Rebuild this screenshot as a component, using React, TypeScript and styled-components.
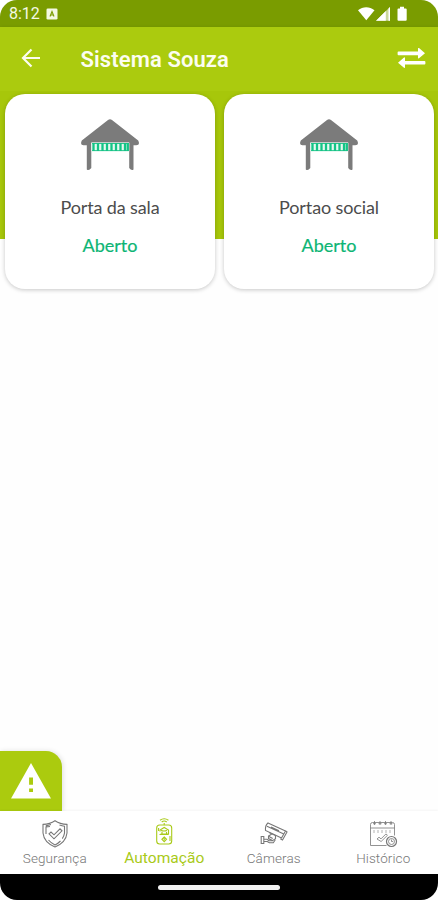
import React from "react";
import styled, { createGlobalStyle } from "styled-components";

const Global = createGlobalStyle`
  * { box-sizing: border-box; }
  html, body { margin: 0; background: #fff; }
`;

const Screen = styled.div`
  width: 438px;
  height: 900px;
  display: flex;
  flex-direction: column;
  overflow: hidden;
  border-radius: 17px;
  background: #fefefe;
  font-family: Roboto, sans-serif;
`;

const StatusBar = styled.header`
  flex: none;
  height: 27px;
  padding: 0 30px 0 9px;
  display: flex;
  align-items: center;
  background: #7a9c00;
  color: #f4f9e4;
`;

const Clock = styled.span`
  width: 37px;
  font-size: 16px;
  line-height: 27px;
`;

const StatusIcons = styled.div`
  display: flex;
  margin-left: auto;
`;

const AppBar = styled.div`
  flex: none;
  height: 64px;
  padding: 0 12px 2px 20px;
  display: flex;
  align-items: center;
  background: #abcb0e;
  color: #fcfdf0;
  box-shadow: 0 1px 3px rgba(70, 90, 0, 0.4);
`;

const Title = styled.h1`
  flex: 1;
  margin: 4px 0 0 38.5px;
  font-size: 22px;
  line-height: 28px;
  font-weight: 600;
  letter-spacing: 0.1px;
`;

const Content = styled.main`
  flex: 1;
  display: flex;
  flex-direction: column;
  justify-content: space-between;
  background: linear-gradient(#a7c70a 0 148px, #fefefe 148px);
`;

const Devices = styled.section`
  display: grid;
  grid-template-columns: 210px 210px;
  column-gap: 9px;
  padding: 3px 5px;
`;

const Card = styled.article`
  height: 195px;
  padding-top: 24px;
  display: flex;
  flex-direction: column;
  align-items: center;
  border-radius: 20px;
  background: #fff;
  box-shadow: 0 1px 4px rgba(0, 0, 0, 0.22);
  font-family: Lato, sans-serif;
`;

const DeviceName = styled.span`
  margin-top: 23px;
  font-size: 18px;
  line-height: 24px;
  letter-spacing: -0.12px;
  color: #4c4c4c;
`;

const DeviceState = styled.span`
  margin-top: 14px;
  font-size: 18px;
  line-height: 24px;
  color: #0db574;
  -webkit-text-stroke: 0.2px #0db574;
`;

const AlertButton = styled.button`
  width: 62px;
  height: 60px;
  padding: 0;
  border: 0;
  display: flex;
  align-items: center;
  justify-content: center;
  border-radius: 0 16px 0 0;
  background: #abcb0e;
  box-shadow: 1px 0 5px rgba(0, 0, 0, 0.12);
`;

const Nav = styled.nav`
  flex: none;
  height: 63px;
  display: grid;
  grid-template-columns: repeat(4, 1fr);
  background: #fff;
  box-shadow: 0 -1px 2px rgba(0, 0, 0, 0.04);
`;

const NavItem = styled.a<{ $active?: boolean }>`
  display: flex;
  flex-direction: column;
  align-items: center;
  padding-top: ${(p) => (p.$active ? 5 : 8)}px;
  color: ${(p) => (p.$active ? "#a9ca18" : "#777")};
  font-size: ${(p) => (p.$active ? 15.5 : 13.5)}px;
  line-height: 18px;
  letter-spacing: ${(p) => (p.$active ? 0.05 : 0.1)}px;
  font-weight: ${(p) => (p.$active ? 400 : 300)};
`;

const NavLabel = styled.span<{ $active?: boolean }>`
  margin-top: ${(p) => (p.$active ? 3 : 0)}px;
`;

const GestureBar = styled.footer`
  flex: none;
  height: 26px;
  display: flex;
  align-items: center;
  justify-content: center;
  background: #000;
`;

const GestureHandle = styled.div`
  width: 122px;
  height: 5px;
  border-radius: 3px;
  background: #f0f0f0;
`;

const KeyboardIcon = () => (
  <svg width="12" height="12" viewBox="0 0 12 12">
    <rect x="0.5" y="0.5" width="11" height="11" rx="1.3" fill="currentColor" />
    <path d="M4 8.500 6 3.500 8 8.500M4.700 7h2.600" fill="none" stroke="#7a9c00" strokeWidth="1.1" />
  </svg>
);

const SystemIcons = () => (
  <svg width="50" height="16" viewBox="0 0 50 16" fill="#fff">
    <path d="M0 4.200C4.800.2 11.600.2 16.500 4.200L8.300 14.300Z" />
    <path d="M18 14.700 32 1v13.700Z" opacity=".6" />
    <path d="M18 14.700 27.800 5v9.700ZM30.500 2.500 32 1v13.700h-1.500Z" />
    <path d="M42 .8h4v1.700h1.700q1 0 1 1v10.200q0 1-1 1h-7.200q-1 0-1-1V3.500q0-1 1-1H42Z" />
  </svg>
);

const BackIcon = () => (
  <svg width="22" height="22" viewBox="0 0 22 22" fill="none" stroke="currentColor" strokeWidth="2.200">
    <path d="M20 11H3.200M11.500 2.500 3 11l8.500 8.500" />
  </svg>
);

const SwapIcon = () => (
  <svg width="29" height="22" viewBox="0 0 29 22" fill="#fff">
    <path d="M1.500 4.600H21V1.300Q21.300.6 22 1.100L28 6.200 22 11.300q-.7.500-1-.2V8.200H1.500Q.6 8.200.6 7.200V5.600q0-1 .9-1Z" />
    <path d="M27.500 13.900H8v-3.200q-.3-.7-1-.2L1 15.700l6 5.100q.7.500 1-.2v-3.200h19.500q.9 0 .9-1v-1.500q0-1-.9-1Z" />
  </svg>
);

const GarageIcon = () => (
  <svg width="60" height="54" viewBox="0 0 60 54">
    <path
      d="M28 1.900q2-1.500 4 0L58.200 22.500Q60.500 27 56.200 27.300h-2.700V51.500q-2 1.500-4.300-1.500V24.500H11.300V50Q9 53 6.800 51.500V27.300H3.500Q-.3 27 1.800 22.500Z"
      fill="#7b7b7b"
    />
    <path d="M11.300 24.800h37.900v8.400H11.300Z" fill="#e6f9f1" />
    <path d="M12 25.500h36.500M12 32.600h36.500" stroke="#15c386" strokeWidth="0.900" />
    <path
      d="M13.500 25v8M18 25v8M22.500 25v8M27 25v8M31.500 25v8M36 25v8M40.500 25v8M45 25v8M47.800 25v8"
      stroke="#15c386"
      strokeWidth="2.300"
    />
  </svg>
);

const WarningIcon = () => (
  <svg width="40" height="36" viewBox="0 0 40 36">
    <path d="M20 0 40 35.500H0Z" fill="#fff" />
    <path d="M18.100 14.500h3.900v7.200h-3.900ZM18.100 25.400h3.900v3.700h-3.900Z" fill="#abcb0e" />
  </svg>
);

const ShieldIcon = () => (
  <svg width="28" height="30" viewBox="0 0 28 30" fill="none" stroke="currentColor" strokeWidth="1.100">
    <path d="M14 1.700Q19 5 26 5.400V14q-1 9.500-12 14Q3 23.500 2 14V5.400Q9 5 14 1.700Z" />
    <path d="M5 15V8l4-.5M4.800 6.900l5.200-1.400M18.500 6q2.500 1 5 1.200v7q-.5 3-2.200 5.400M19.500 22Q17 24.500 14 26q-4-2-6.500-5" />
    <path d="m8 14.800 2-1.800 3 2.800 6-6 2 2-8 8Z" />
  </svg>
);

const RemoteIcon = () => (
  <svg width="20" height="30" viewBox="0 0 20 30" fill="none" stroke="currentColor" strokeWidth="1.100">
    <path d="M6 4.300q4.200-3 8.400 0M7.700 6q2.500-2 5 0M10.200 7v2" />
    <rect x="2.700" y="9" width="15" height="19" rx="3" />
    <path d="M6 15.500V14l4.200-2.500 4.300 2.500v4h-8M7 14.500q3 1 6 0M8 16v3M12.500 16v3M5.500 18.500h9" />
    <path d="m10.200 21 2.300 2.300-2.300 2.300-2.300-2.300ZM10.200 22.300v2" />
    <path d="M4.600 12v3M16 20v5" />
  </svg>
);

const CameraIcon = () => (
  <svg width="30" height="30" viewBox="0 0 30 30" fill="none" stroke="currentColor" strokeWidth="1.100">
    <path d="m9 4 17.500 8-4 7L6.500 11.500Q6 6.500 9 4Z" />
    <path d="m8 7.200 16.800 7.800M12 8l8 3.700M26.500 12l1.500 1-4.500 8-2.200-1.200M10 13.500l6.500 3v3.300l-3 1.800-4-2V17l3-1.800" />
    <path d="M2.200 17.500h2.600v7H2.200ZM4.800 20.300H8l2 1.500h3.500M4.800 22.500h3.500l2 1.300h4l2-3M9.500 17.200l4.200 2.200" />
  </svg>
);

const HistoryIcon = () => (
  <svg width="30" height="30" viewBox="0 0 30 30" fill="none" stroke="currentColor" strokeWidth="0.800">
    <path d="M18.500 26.500h-16V5.500q0-2 2-2h20q2 0 2 2v11M2.500 9h24" />
    <path d="M6.500 2v4M12 2v4M17.500 2v4M23 2v4M5 4.700h3M10.500 4.700h3M16 4.700h3M21.500 4.700h3" />
    <path d="M6 11v3M10 11v3M14 11v3M18 11v3M22 11v3" opacity=".7" />
    <path d="m9 20 2-1.800 2 1.700 5-5 1.400 1.500-6.300 6.100Z" />
    <circle cx="23.500" cy="22.500" r="5" strokeWidth="1.200" />
    <circle cx="23.500" cy="22.500" r="3" />
    <path d="M23.500 20.500v2h1.700" />
  </svg>
);

const devices = [
  { name: "Porta da sala", state: "Aberto" },
  { name: "Portao social", state: "Aberto" },
];

const tabs = [
  { label: "Segurança", Icon: ShieldIcon, active: false },
  { label: "Automação", Icon: RemoteIcon, active: true },
  { label: "Câmeras", Icon: CameraIcon, active: false },
  { label: "Histórico", Icon: HistoryIcon, active: false },
];

export default function App() {
  return (
    <>
      <Global />
      <Screen>
        <StatusBar>
          <Clock>8:12</Clock>
          <KeyboardIcon />
          <StatusIcons>
            <SystemIcons />
          </StatusIcons>
        </StatusBar>
        <AppBar>
          <BackIcon />
          <Title>Sistema Souza</Title>
          <SwapIcon />
        </AppBar>
        <Content>
          <Devices>
            {devices.map((d) => (
              <Card key={d.name}>
                <GarageIcon />
                <DeviceName>{d.name}</DeviceName>
                <DeviceState>{d.state}</DeviceState>
              </Card>
            ))}
          </Devices>
          <AlertButton aria-label="Alerta">
            <WarningIcon />
          </AlertButton>
        </Content>
        <Nav>
          {tabs.map(({ label, Icon, active }) => (
            <NavItem key={label} $active={active}>
              <Icon />
              <NavLabel $active={active}>{label}</NavLabel>
            </NavItem>
          ))}
        </Nav>
        <GestureBar>
          <GestureHandle />
        </GestureBar>
      </Screen>
    </>
  );
}
